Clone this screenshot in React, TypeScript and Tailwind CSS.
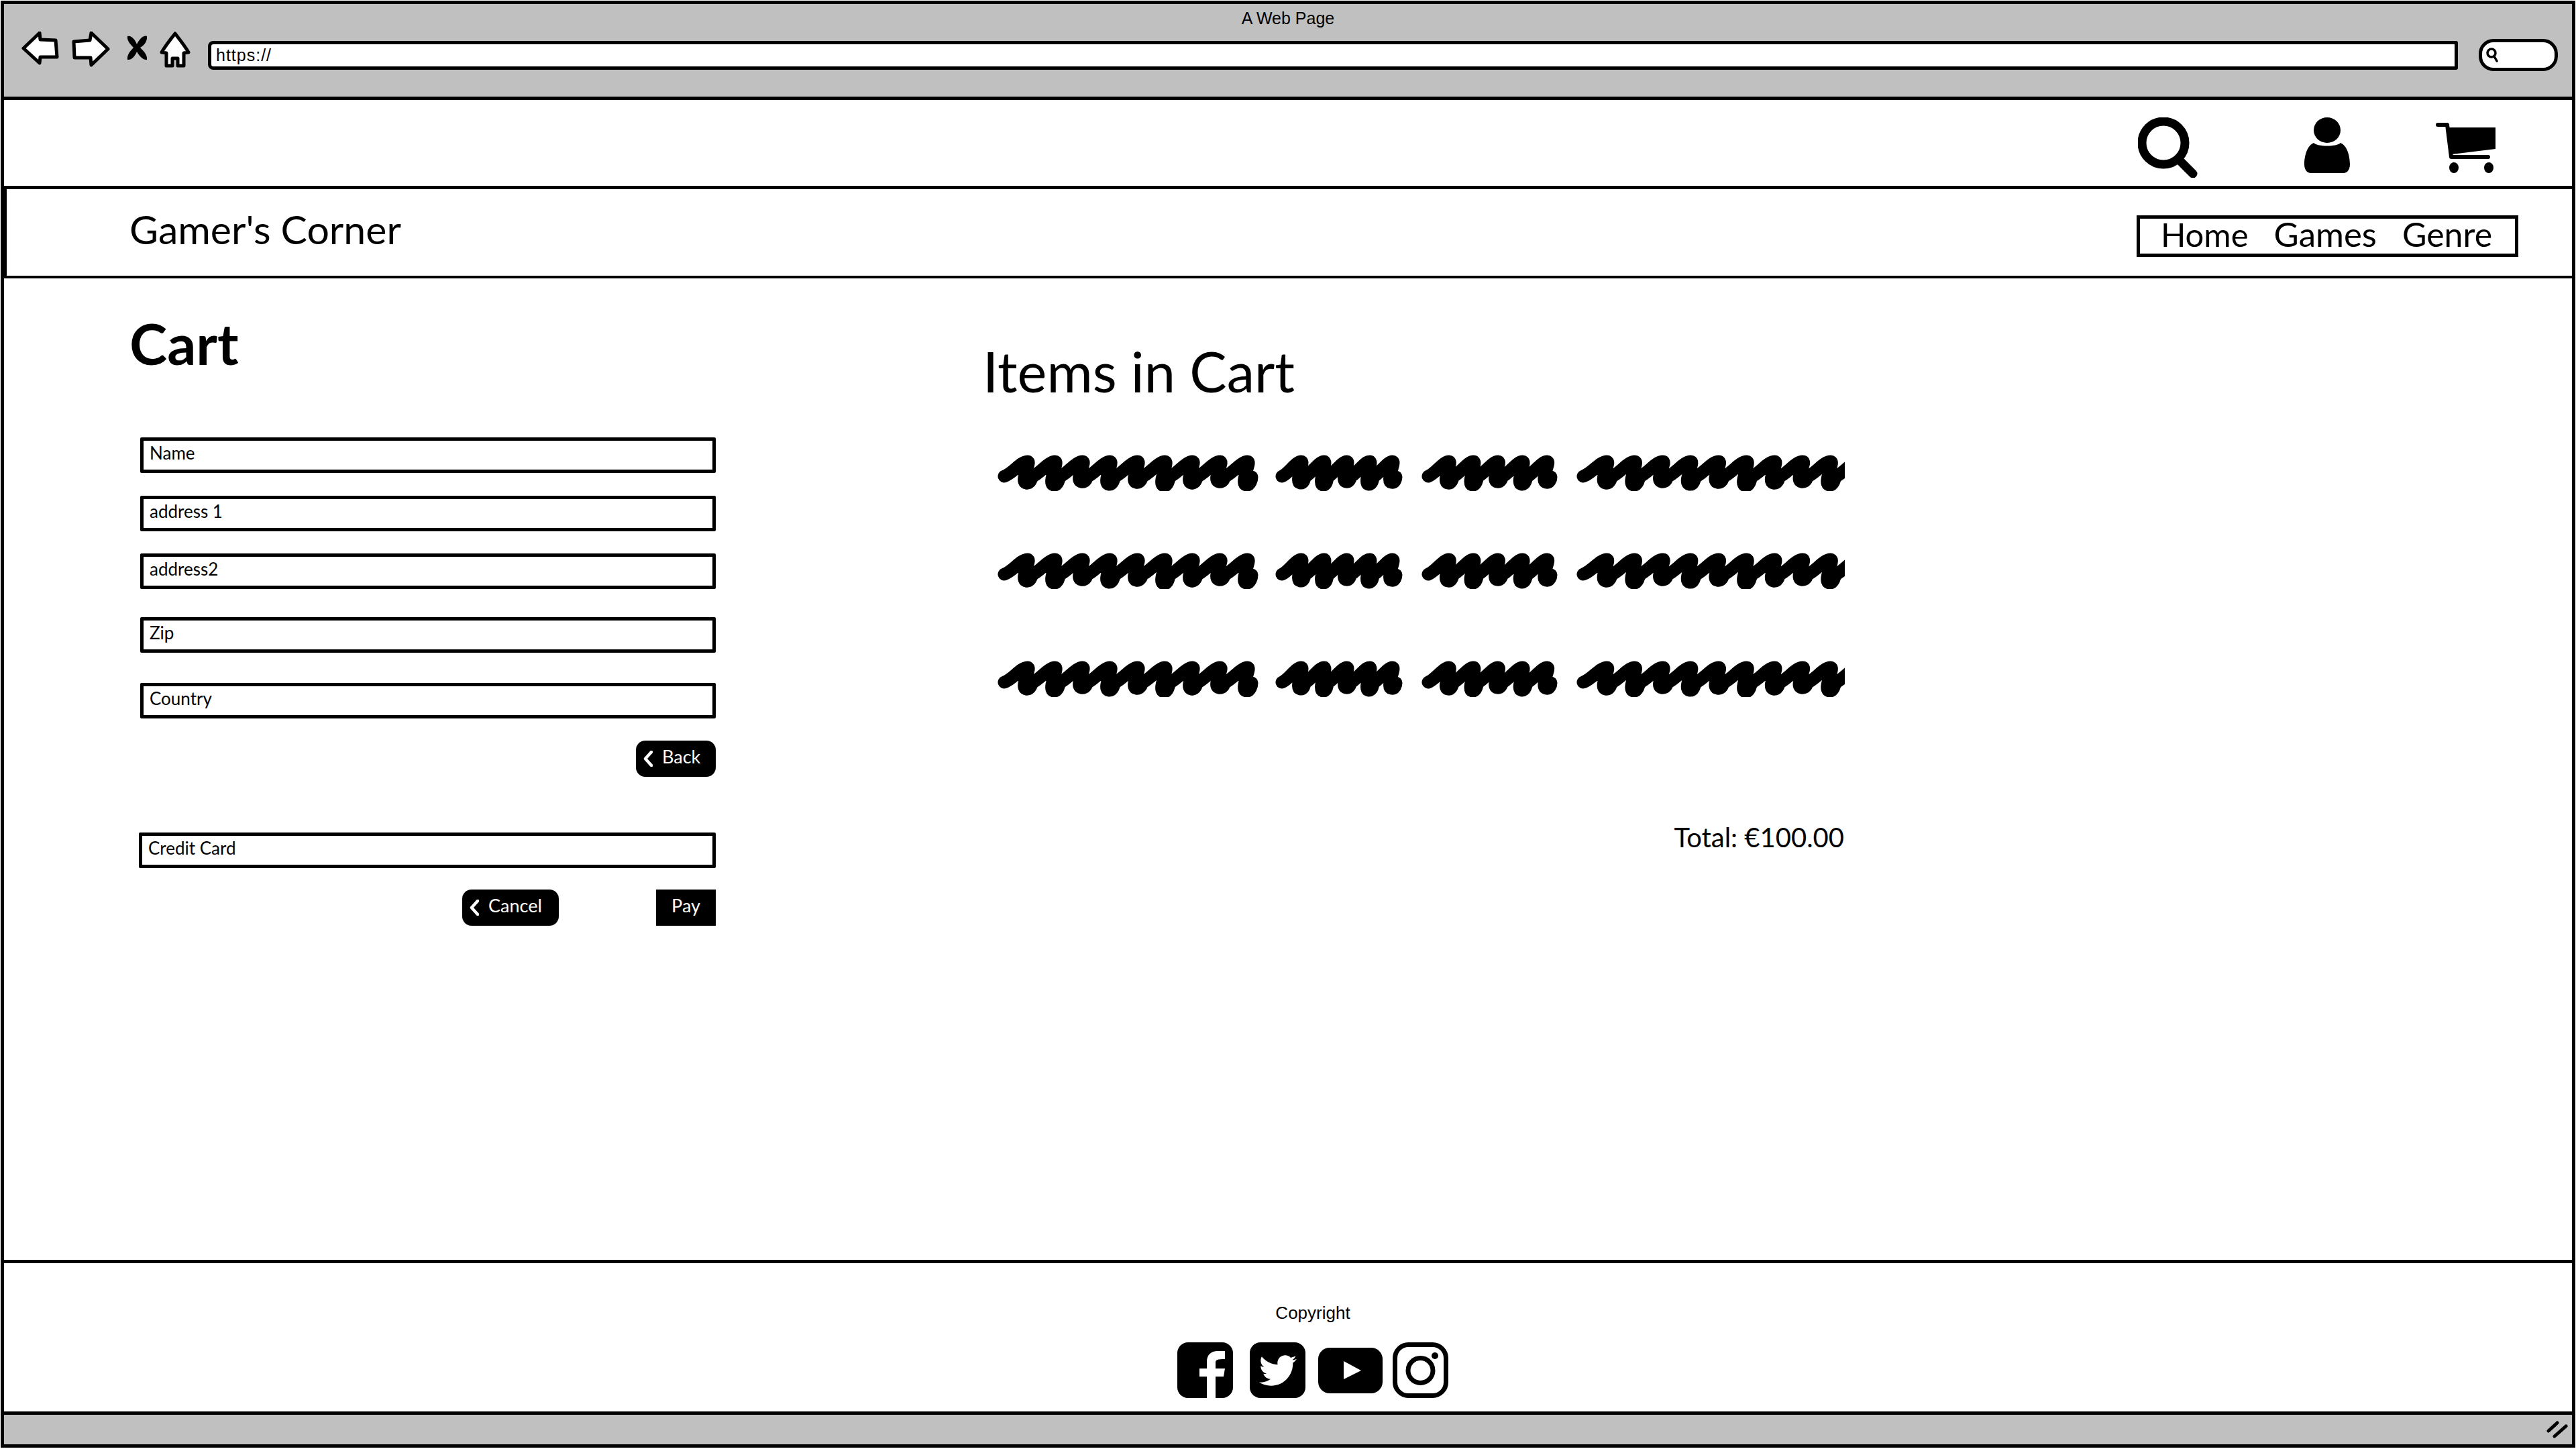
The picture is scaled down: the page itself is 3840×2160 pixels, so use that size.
import { FaTwitter } from "react-icons/fa";

const hand = { fontFamily: '"Lato", "Noto Sans", sans-serif' };

const wobble = [0, 3, -2, 2, -1, 4, 0, -2, 3];

const scribblePath = (start: number, end: number, loops: number) => {
  // cursive loops: long stroke up-right, short hook back down
  const step = (end - start - 20) / loops;
  let d = `M${start + 10} 32`;
  for (let i = 0; i < loops; i++) {
    const x = start + 10 + i * step;
    const dy = wobble[i % wobble.length];
    d += ` C${x + step * 0.3} 28 ${x + step * 0.6} 10 ${x + step * 0.85} 10`;
    d += ` C${x + step} 10 ${x + step * 0.55} ${40 + dy} ${x + step * 0.8} ${42 + dy}`;
    d += ` C${x + step * 0.95} ${43 + dy} ${x + step} 36 ${x + step} 33`;
  }
  return d;
};

const words = [
  [0, 389, 9],
  [414, 604, 5],
  [632, 835, 5],
  [863, 1300, 10],
];

const Scribble = () => (
  <svg width="1263" height="54" viewBox="0 0 1263 54" className="block">
    {words.map(([start, end, loops]) => (
      <path
        key={start}
        d={scribblePath(start, end, loops)}
        fill="none"
        stroke="black"
        strokeWidth="19"
        strokeLinecap="round"
        strokeLinejoin="round"
      />
    ))}
  </svg>
);

const Field = ({ label, className }: { label: string; className: string }) => (
  <div
    style={hand}
    className={`flex items-center h-[53px] border-[5px] border-black rounded-[2px] pl-[9px] pb-[6px] text-[26px] text-black ${className}`}
  >
    {label}
  </div>
);

const BackButton = ({ label, className }: { label: string; className: string }) => (
  <div
    style={hand}
    className={`flex items-center h-[54px] pl-[11px] gap-[14px] bg-black text-white rounded-[14px] text-[27px] ${className}`}
  >
    <svg width="14" height="24" viewBox="0 0 14 24" className="shrink-0">
      <path d="M12 2 L3 12 L12 22" fill="none" stroke="white" strokeWidth="4.5" strokeLinecap="round" strokeLinejoin="round" />
    </svg>
    <span className="pb-[6px]">{label}</span>
  </div>
);

export default function App() {
  return (
    <div className="h-[2160px] w-[3840px] bg-white pt-px px-px">
      <div className="flex flex-col h-[2157px] border-[5px] border-black">
        {/* browser chrome */}
        <div className="h-[143px] shrink-0 bg-[#c0c0c0] border-b-[5px] border-black">
          <div
            className="h-[41px] pt-[6px] text-center text-[25px] leading-[30px] text-black"
            style={{ fontFamily: '"Liberation Sans", sans-serif' }}
          >
            A Web Page
          </div>
          <div className="flex items-start pl-[26px]">
            <svg width="56" height="50" viewBox="0 0 56 50">
              <path d="M3 25 L27 2 L28 12 L51 13 L53 38 L28 38 L27 47 Z" fill="white" stroke="black" strokeWidth="5" strokeLinejoin="round" />
            </svg>
            <svg width="58" height="53" viewBox="0 0 58 53" className="ml-[18px]">
              <path d="M55 26 L30 2 L28 13 L4 15 L5 39 L29 39 L30 50 Z" fill="white" stroke="black" strokeWidth="5" strokeLinejoin="round" />
            </svg>
            <svg width="33" height="38" viewBox="0 0 33 38" className="ml-[24px] mt-[5px]">
              <path d="M2 2 C8 0 14 8 16 14 C20 6 26 0 31 2 C32 10 26 16 21 19 C26 24 32 30 31 37 C26 38 20 32 16 25 C13 32 8 38 2 37 C1 30 6 24 11 19 C6 14 1 8 2 2 Z" fill="black" />
            </svg>
            <svg width="46" height="54" viewBox="0 0 46 54" className="ml-[17px]">
              <path d="M23 3 C30 12 38 22 43 31 L36 32 L36 51 L27 51 L27 40 L19 40 L19 51 L10 51 L10 32 L3 31 C8 22 16 12 23 3 Z" fill="white" stroke="black" strokeWidth="5" strokeLinejoin="round" />
            </svg>
            <div
              className="flex-1 flex items-center h-[43px] mt-[14px] ml-[26px] bg-white border-[5px] border-black rounded-l-[8px] rounded-r-[3px] pl-[7px] text-[25px] tracking-[1px] text-black"
              style={{ fontFamily: '"Liberation Sans", sans-serif' }}
            >
              https://
            </div>
            <div className="flex items-center w-[118px] h-[48px] mt-[11px] ml-[31px] mr-[21px] bg-white border-[5px] border-black rounded-[22px] pl-[5px]">
              <svg width="20" height="22" viewBox="0 0 20 22">
                <circle cx="9" cy="8" r="6" fill="none" stroke="black" strokeWidth="3.5" />
                <path d="M13 13 L17 20" stroke="black" strokeWidth="3.5" strokeLinecap="round" />
              </svg>
            </div>
          </div>
        </div>

        {/* icon row */}
        <div className="flex items-start justify-end h-[133px] shrink-0 border-b-[5px] border-black pr-[113px]">
          <svg width="90" height="90" viewBox="0 0 90 90" className="mt-[26px]">
            <ellipse cx="38" cy="38" rx="32" ry="32" fill="none" stroke="black" strokeWidth="13" />
            <path d="M60 62 L82 84" stroke="black" strokeWidth="13" strokeLinecap="round" />
          </svg>
          <svg width="68" height="83" viewBox="0 0 68 83" className="ml-[158px] mt-[26px]">
            <ellipse cx="34" cy="19" rx="20" ry="19" fill="black" />
            <path d="M14 38 C20 44 48 44 54 38 C64 42 68 58 68 70 C68 78 64 83 58 83 L10 83 C4 83 0 78 0 70 C0 58 4 42 14 38 Z" fill="black" />
          </svg>
          <svg width="90" height="76" viewBox="0 0 90 76" className="ml-[128px] mt-[33px]">
            <path d="M3 4 L17 4 L23 52 L78 52" fill="none" stroke="black" strokeWidth="6" strokeLinecap="round" strokeLinejoin="round" />
            <path d="M17 8 L89 8 L89 40 L24 48 Z" fill="black" />
            <ellipse cx="27" cy="68" rx="7" ry="8" fill="black" />
            <ellipse cx="79" cy="68" rx="7" ry="8" fill="black" />
          </svg>
        </div>

        {/* nav */}
        <div className="flex items-center justify-between h-[133px] shrink-0 border-b-[4px] border-l-[4px] border-black pl-[183px] pr-[80px]" style={hand}>
          <div className="text-[59px] leading-[64px] text-black pb-[10px]">Gamer's Corner</div>
          <div className="flex items-center justify-center gap-[38px] w-[569px] h-[62px] mt-[10px] pb-[5px] pr-[3px] border-[5px] border-black text-[50px] leading-[56px] text-black">
            <span className="text-[49px]">Home</span>
            <span className="text-[51px]">Games</span>
            <span>Genre</span>
          </div>
        </div>

        {/* main */}
        <div className="flex flex-1 pl-[187px]" style={hand}>
          <div className="w-[874px] shrink-0">
            <h1 className="mt-[48px] text-[85px] leading-[96px] font-bold text-black">Cart</h1>
            <div className="pl-[16px]">
              <Field label="Name" className="mt-[93px]" />
              <Field label="address 1" className="mt-[34px]" />
              <Field label="address2" className="mt-[33px]" />
              <Field label="Zip" className="mt-[42px]" />
              <Field label="Country" className="mt-[45px]" />
              <div className="flex justify-end mt-[33px]">
                <BackButton label="Back" className="w-[119px]" />
              </div>
              <Field label="Credit Card" className="mt-[83px] -ml-[2px]" />
              <div className="flex justify-end mt-[32px]">
                <BackButton label="Cancel" className="w-[144px]" />
                <div className="flex items-center justify-center w-[89px] h-[54px] ml-[145px] pb-[6px] bg-black text-white text-[27px]">Pay</div>
              </div>
            </div>
          </div>
          <div className="ml-[398px] w-[1290px]">
            <h2 className="mt-[90px] text-[83px] leading-[96px] text-black">Items in Cart</h2>
            <div className="ml-[22px] mt-[77px]">
              <Scribble />
            </div>
            <div className="ml-[22px] mt-[92px]">
              <Scribble />
            </div>
            <div className="ml-[22px] mt-[107px]">
              <Scribble />
            </div>
            <div className="w-[1284px] mt-[185px] text-right text-[40px] leading-[48px] text-black">Total: €100.00</div>
          </div>
        </div>

        {/* footer */}
        <div className="h-[226px] shrink-0 border-t-[5px] border-black pl-[74px] pt-[59px]">
          <div
            className="text-center text-[26px] leading-[30px] text-black"
            style={{ fontFamily: '"Liberation Sans", sans-serif' }}
          >
            Copyright
          </div>
          <div className="flex items-center justify-center mt-[29px]">
            <svg width="83" height="83" viewBox="0 0 83 83">
              <rect width="83" height="83" rx="16" fill="black" />
              <path d="M44 83 L44 51 L33 51 L33 39 L44 39 L44 29 C44 19 50 13 60 13 L71 13 L71 25 C60 25 57 26 57 30 L57 39 L71 39 L69 51 L57 51 L57 83 Z" fill="white" />
            </svg>
            <div className="flex items-center justify-center w-[83px] h-[83px] ml-[25px] bg-black rounded-[16px]">
              <FaTwitter className="w-[56px] h-[56px] text-white" />
            </div>
            <svg width="96" height="68" viewBox="0 0 96 68" className="ml-[19px]">
              <rect width="96" height="68" rx="17" fill="black" />
              <path d="M38 20 L64 34 L38 47 Z" fill="white" />
            </svg>
            <svg width="83" height="83" viewBox="0 0 83 83" className="ml-[15px]">
              <rect x="3.5" y="3.5" width="76" height="76" rx="20" fill="none" stroke="black" strokeWidth="7" />
              <circle cx="41.5" cy="42" r="18.5" fill="none" stroke="black" strokeWidth="7" />
              <circle cx="63" cy="20" r="5" fill="black" />
            </svg>
          </div>
        </div>

        {/* status bar */}
        <div className="flex items-center justify-end h-[49px] shrink-0 border-t-[5px] border-black bg-[#c0c0c0] pr-[6px]">
          <svg width="32" height="26" viewBox="0 0 32 26">
            <path d="M3 15 L16 3 M12 23 L29 8" stroke="black" strokeWidth="5" strokeLinecap="round" />
          </svg>
        </div>
      </div>
    </div>
  );
}
